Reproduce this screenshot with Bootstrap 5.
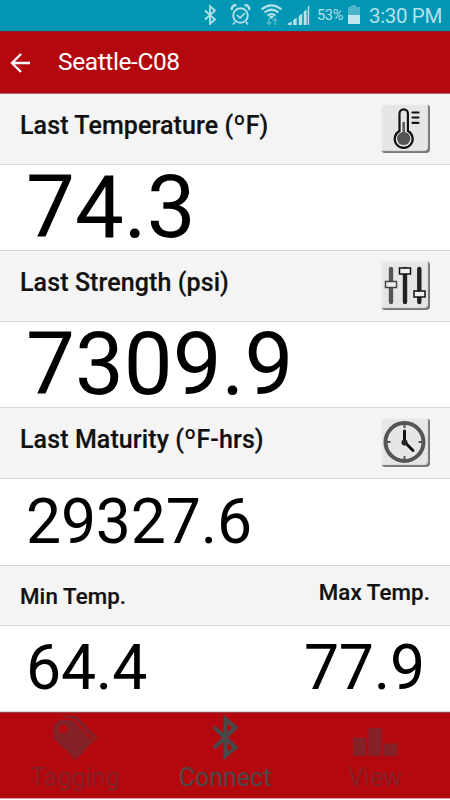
<!DOCTYPE html>
<html lang="en">
<head>
<meta charset="utf-8">
<meta name="viewport" content="width=device-width, initial-scale=1">
<title>Seattle-C08</title>
<link href="https://cdn.jsdelivr.net/npm/bootstrap@5.3.0/dist/css/bootstrap.min.css" rel="stylesheet">
<style>
body{font-family:Roboto,"Liberation Sans",sans-serif;color:#000;background:#fff;height:800px;overflow:hidden}
svg{display:block;flex:none}
.status{height:31px;background:#0096b4;color:#b5e0e9;padding-right:8px}
.status .pct{font-size:14.5px;line-height:30px;letter-spacing:-.3px;width:26px}
.status .clock{font-size:20.5px;line-height:30px;letter-spacing:-.35px}
.appbar{height:63px;background:#b4080f;color:#fff;border-top:1px solid #8f1d2e;border-bottom:1px solid #a76a6d;padding-left:10px}
.appbar h1{font-size:24.5px;font-weight:400;line-height:30px;letter-spacing:-.4px;margin-left:28px;padding-bottom:1px}
.head{background:#f4f4f4;border-bottom:1px solid #d6d6d6;height:71px;padding-left:20px;padding-right:20px;color:#111}
.head h2{font-size:25px;font-weight:500;line-height:30px;letter-spacing:.1px;padding-top:2px;-webkit-text-stroke:.2px #111}
.head h2 span{font-weight:400;font-size:27px;line-height:1;-webkit-text-stroke:0}
.head .tile{margin-bottom:1px}
.head.short{height:60px}
.head.short h2{font-size:22.3px;padding-top:0}
.reading{height:86px;border-bottom:1px solid #d6d6d6;padding-left:26px;padding-right:25px}
.reading.tall{height:87px}
.big{font-size:87px;line-height:83px;padding-bottom:1px}
.mid{font-size:62.5px;line-height:80px;letter-spacing:-.2px}
.mid.low{padding-bottom:2px}
.tile{width:49px;height:49px;border-radius:4px;background:#e6e6e6;box-shadow:inset 1px 1px 1px #f0f0f0,inset -2px -2px 1px #777}
.tabs{height:86px;background:#b4080f;border-top:1px solid #9b4045;color:#842127;box-shadow:0 1px 0 #d7a4a6}
.tabs a{color:inherit;font-size:25px;line-height:30px;letter-spacing:0}
.tabs a.current{color:#484848}
.tabs svg{margin-top:2px;margin-bottom:2px}
</style>
<script src="https://cdn.jsdelivr.net/npm/bootstrap@5.3.0/dist/js/bootstrap.bundle.min.js"></script>
</head>
<body class="d-flex flex-column">
<div class="status d-flex align-items-center justify-content-end">
  <svg width="128" height="31" viewBox="190 0 128 31" fill="none" stroke="#b5e0e9">
    <path d="M206 10.500l10 9-5 4.200V6.300l5 4.200-10 9" stroke-width="1.800"/>
    <circle cx="241.500" cy="15.500" r="7.300" stroke-width="1.900"/>
    <path d="M238 15l3 3 5-5M236 22l-2 2.500M247 22l2 2.500" stroke-width="1.700"/>
    <path d="M233 10a3.500 3.500 0 0 1 4.500-4.500M245.500 5.500a3.500 3.500 0 0 1 4.500 4.500" stroke-width="2.400"/>
    <path d="M262.500 9.300q10-8 20 0M265.500 12.500q7-5.500 14 0M268.500 15.600q4-3 8 0" stroke-width="2.200"/>
    <path d="M272.500 19l-2.500-2.300q2.500-2 5 0z" fill="#b5e0e9" stroke="none"/>
    <path d="M270 18v6M267.700 22l2.300 2.500 2.300-2.500M276 25v-6M273.700 21l2.300-2.500 2.300 2.500" stroke="#55b5ca" stroke-width="1.500"/>
    <path d="M289 25v-1.500l4-2V25zM294.500 25v-5l3.500-2.500V25zM300 25v-9l3.500-2.500V25zM305 25V11.500l3-2V25zM309 25V7l1.500-2v20z" transform="translate(-.3)" fill="#b5e0e9" stroke="none"/>
  </svg>
  <span class="pct">53%</span>
  <svg class="ms-1" width="14" height="31" viewBox="0 0 14 31"><path d="M1 7h3V5h5v2h4v8H1z" fill="#4eb4c9"/><path d="M1 15h12v9H1z" fill="#c1e6ed"/></svg>
  <span class="clock ms-2">3:30 PM</span>
</div>
<header class="appbar d-flex align-items-center">
  <svg width="20" height="20" viewBox="0 0 20 20" fill="none" stroke="#fff" stroke-width="2.300"><path d="M20 10H2M11 1L2 10l9 9"/></svg>
  <h1 class="mb-0">Seattle-C08</h1>
</header>
<main>
  <div class="head d-flex align-items-center justify-content-between">
    <h2 class="mb-2">Last Temperature (<span>º</span>F)</h2>
    <div class="tile"><svg width="49" height="49" viewBox="0 0 49 49" fill="none">
      <path d="M18.500 27V9.500a4.200 4.200 0 0 1 8.400 0V27a9 9 0 1 1-8.400 0z" fill="#e6e6e6" stroke="#111" stroke-width="2.200"/>
      <circle cx="22.700" cy="34.500" r="6.600" fill="#555"/><path d="M22.700 18v14" stroke="#555" stroke-width="2.400"/>
      <path d="M31.500 8.500h6M31.500 13.500h6M31.500 18.800h6" stroke="#111" stroke-width="2.200" stroke-linecap="round"/></svg></div>
  </div>
  <div class="reading d-flex align-items-center"><div class="big">74.3</div></div>
  <div class="head d-flex align-items-center justify-content-between">
    <h2 class="mb-2">Last Strength (psi)</h2>
    <div class="tile"><svg width="49" height="49" viewBox="0 0 49 49" fill="none" stroke-linecap="round">
      <path d="M10 8v33" stroke="#555" stroke-width="4.400"/><path d="M24 8v33M38.300 8v33" stroke="#222" stroke-width="4.400"/>
      <rect x="4.500" y="20.500" width="11" height="6" fill="#eee" stroke="#444" stroke-width="1.500"/>
      <rect x="18.500" y="7" width="11" height="6" fill="#eee" stroke="#111" stroke-width="1.500"/>
      <rect x="33" y="30" width="11" height="6" fill="#eee" stroke="#111" stroke-width="1.500"/></svg></div>
  </div>
  <div class="reading d-flex align-items-center"><div class="big">7309.9</div></div>
  <div class="head d-flex align-items-center justify-content-between">
    <h2 class="mb-2">Last Maturity (<span>º</span>F-hrs)</h2>
    <div class="tile"><svg width="49" height="49" viewBox="0 0 49 49" fill="none">
      <circle cx="23.500" cy="24" r="19" stroke="#555" stroke-width="4"/>
      <path d="M23.500 6v4M23.500 38v4M5.500 24h4M37.500 24h4" stroke="#555" stroke-width="2"/>
      <path d="M23.500 13v11l8.500 8.500" stroke="#111" stroke-width="3" stroke-linecap="round"/><circle cx="23.500" cy="24.500" r="3" fill="#222"/></svg></div>
  </div>
  <div class="reading tall d-flex align-items-center"><div class="mid">29327.6</div></div>
  <div class="head short d-flex align-items-center justify-content-between">
    <h2 class="mb-0">Min Temp.</h2><h2 class="mb-2">Max Temp.</h2>
  </div>
  <div class="reading d-flex align-items-center justify-content-between"><div class="mid low">64.4</div><div class="mid low">77.9</div></div>
</main>
<nav class="tabs row g-0 text-center">
  <a class="col-4 d-flex flex-column align-items-center text-decoration-none" href="#">
    <svg width="46" height="46" viewBox="52 715 46 46" fill="currentColor"><path fill-rule="evenodd" d="M53.300 726l6-6h13L93.500 741.500l-18 18.500L53.300 738zM67.500 729a4.300 4.300 0 1 0-8.600 0 4.300 4.300 0 0 0 8.600 0z"/><path d="M62 717.500l3-1.700h11.500L97.500 738l-2.500 3-21-22.500z"/></svg>
    <span>Tagging</span>
  </a>
  <a class="col-4 d-flex flex-column align-items-center text-decoration-none current" href="#">
    <svg width="46" height="46" viewBox="202 715 46 46" fill="none" stroke="currentColor" stroke-width="4"><path d="M214 727l21.500 20.500-10 8.500v-37l10 8.500L214 748"/></svg>
    <span>Connect</span>
  </a>
  <a class="col-4 d-flex flex-column align-items-center text-decoration-none" href="#">
    <svg width="46" height="46" viewBox="352 715 46 46" fill="currentColor"><path d="M353 737.500h13V756h-13zM368.500 728h13v28h-13zM384 743.500h13V756h-13z"/></svg>
    <span>View</span>
  </a>
</nav>
</body>
</html>
